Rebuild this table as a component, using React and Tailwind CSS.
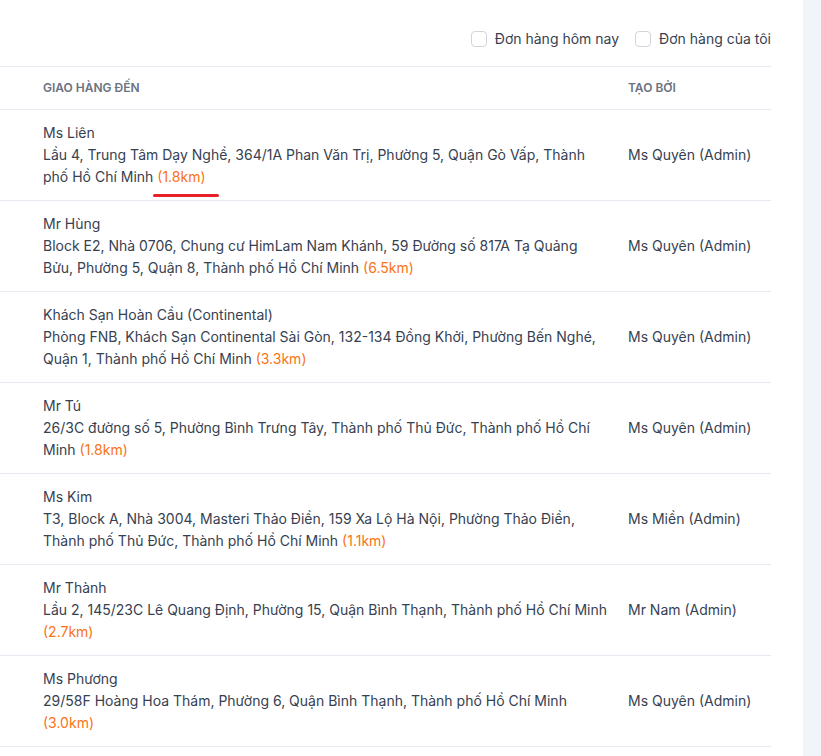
import React from 'react'

const orders = [
  {
    name: 'Ms Liên',
    address: 'Lầu 4, Trung Tâm Dạy Nghề, 364/1A Phan Văn Trị, Phường 5, Quận Gò Vấp, Thành phố Hồ Chí Minh',
    distance: '1.8km',
    creator: 'Ms Quyên (Admin)',
    marked: true,
  },
  {
    name: 'Mr Hùng',
    address: 'Block E2, Nhà 0706, Chung cư HimLam Nam Khánh, 59 Đường số 817A Tạ Quảng Bửu, Phường 5, Quận 8, Thành phố Hồ Chí Minh',
    distance: '6.5km',
    creator: 'Ms Quyên (Admin)',
  },
  {
    name: 'Khách Sạn Hoàn Cầu (Continental)',
    address: 'Phòng FNB, Khách Sạn Continental Sài Gòn, 132-134 Đồng Khởi, Phường Bến Nghé, Quận 1, Thành phố Hồ Chí Minh',
    distance: '3.3km',
    creator: 'Ms Quyên (Admin)',
  },
  {
    name: 'Mr Tú',
    address: '26/3C đường số 5, Phường Bình Trưng Tây, Thành phố Thủ Đức, Thành phố Hồ Chí Minh',
    distance: '1.8km',
    creator: 'Ms Quyên (Admin)',
  },
  {
    name: 'Ms Kim',
    address: 'T3, Block A, Nhà 3004, Masteri Thảo Điền, 159 Xa Lộ Hà Nội, Phường Thảo Điền, Thành phố Thủ Đức, Thành phố Hồ Chí Minh',
    distance: '1.1km',
    creator: 'Ms Miền (Admin)',
  },
  {
    name: 'Mr Thành',
    address: 'Lầu 2, 145/23C Lê Quang Định, Phường 15, Quận Bình Thạnh, Thành phố Hồ Chí Minh',
    distance: '2.7km',
    creator: 'Mr Nam (Admin)',
  },
  {
    name: 'Ms Phương',
    address: '29/58F Hoàng Hoa Thám, Phường 6, Quận Bình Thạnh, Thành phố Hồ Chí Minh',
    distance: '3.0km',
    creator: 'Ms Quyên (Admin)',
  },
]

function Checkbox({ label }) {
  return (
    <label className="flex items-center gap-2 cursor-pointer">
      <span className="w-4 h-4 rounded border border-[#d1d5db] bg-white" />
      <span>{label}</span>
    </label>
  )
}

export default function App() {
  return (
    <div className="flex min-h-screen bg-white text-[14px] text-[#374151]" style={{ fontFamily: 'Inter, "Noto Sans", sans-serif' }}>
      <div className="w-[803px] shrink-0 pr-8">
        {/* Filters */}
        <div className="h-[66px] pt-[11px] flex items-center justify-end gap-4">
          <Checkbox label="Đơn hàng hôm nay" />
          <Checkbox label="Đơn hàng của tôi" />
        </div>

        {/* Table */}
        <div className="border-t border-[#e5e9f0]">
          <div className="grid grid-cols-[628px_1fr] h-[43px] items-center border-b border-[#e5e9f0] text-[12px] font-semibold uppercase text-[#6b7280]">
            <div className="pl-[43px]">Giao hàng đến</div>
            <div>Tạo bởi</div>
          </div>

          {orders.map((o, i) => (
            <div key={i} className="relative grid grid-cols-[628px_1fr] items-center border-b border-[#e5e9f0] leading-[22px]">
              <div className="pl-[43px] pr-5 py-3">
                <p className="text-[#374151]">{o.name}</p>
                <p>
                  {o.address} <span className="text-[#f97316]">({o.distance})</span>
                </p>
              </div>
              <div>{o.creator}</div>
              {o.marked && (
                <span className="absolute left-[153px] top-[84px] w-[66px] h-[3px] rounded-full bg-[#e8202a]" />
              )}
            </div>
          ))}
        </div>
      </div>
      <div className="flex-1 bg-[#f1f4f9]" />
    </div>
  )
}
